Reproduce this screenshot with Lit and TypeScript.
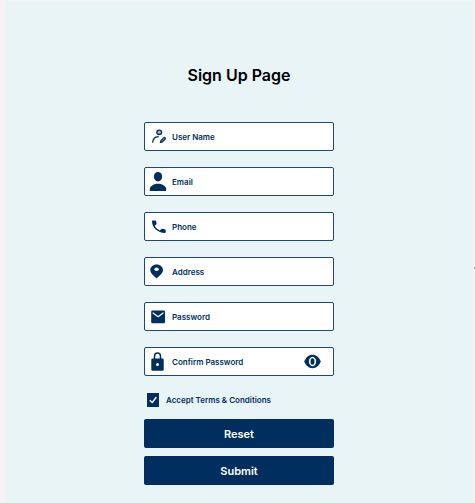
import { LitElement, html, css, svg } from "lit";
import { customElement, property, state } from "lit/decorators.js";

const icons = {
  user: svg`
    <g fill="none" stroke="currentColor" stroke-width="1.3" stroke-linecap="round">
      <ellipse cx="10.2" cy="6.3" rx="2.4" ry="2.2" fill="#a9bacd"/>
      <path d="M3.7 16.2C3.9 13 6 11 9.2 10.7"/>
      <path d="M11.6 16.4l.4-1.9 2.6-2.6a.9.9 0 0 1 1.4 1.3l-2.7 2.7z" fill="#8fa6bf"/>
    </g>`,
  person: svg`
    <ellipse cx="9" cy="5.7" rx="4.1" ry="4.8"/>
    <path d="M.8 20v-1.9C.8 14.8 5.5 12.8 9 12.8s8.200 2 8.200 5.300V20z"/>`,
  phone: svg`
    <path transform="translate(.7 2.3) scale(.76 .7)"
      d="M6.62 10.79c1.44 2.83 3.76 5.14 6.59 6.59l2.2-2.2c.27-.27.67-.36 1.02-.24 1.12.37 2.33.57 3.57.57.55 0 1 .45 1 1V20c0 .55-.45 1-1 1-9.39 0-17-7.61-17-17 0-.55.45-1 1-1h3.5c.55 0 1 .45 1 1 0 1.25.2 2.45.57 3.57.11.35.03.74-.25 1.02z"/>`,
  pin: svg`
    <path d="M7.6 3.5C4.1 3.5 1.3 5.9 1.3 9c0 3.1 3 5.2 6.300 8.500C10.900 14.200 14 12.100 14 9c0-3.100-2.800-5.500-6.400-5.500z"/>
    <ellipse cx="7.6" cy="8.3" rx="2.2" ry="1.7" fill="#fff"/>`,
  mail: svg`
    <rect x="2.2" y="4.5" width="13.8" height="12.8" rx="1.2"/>
    <path d="M3.7 6.7L9.1 10.7 14.5 6.7" fill="none" stroke="#fff" stroke-width="1.3"/>`,
  lock: svg`
    <path d="M5.5 8.5V5.2a3 3.2 0 0 1 6 0V8.5" fill="none" stroke="currentColor" stroke-width="1.5"/>
    <rect x="2.3" y="7.5" width="12.4" height="12.2" rx="1.3"/>
    <circle cx="8.5" cy="13.6" r="1.5" fill="#fff"/>`,
};

type IconName = keyof typeof icons;

interface Field {
  name: string;
  label: string;
  icon: IconName;
  type: string;
}

const fields: Field[] = [
  { name: "username", label: "User Name", icon: "user", type: "text" },
  { name: "email", label: "Email", icon: "person", type: "email" },
  { name: "phone", label: "Phone", icon: "phone", type: "tel" },
  { name: "address", label: "Address", icon: "pin", type: "text" },
  { name: "password", label: "Password", icon: "mail", type: "password" },
  { name: "confirm", label: "Confirm Password", icon: "lock", type: "password" },
];

@customElement("form-field")
class FormField extends LitElement {
  @property({ attribute: false }) field!: Field;
  @state() private revealed = false;

  static styles = css`
    :host {
      display: block;
    }
    .field {
      display: flex;
      align-items: center;
      gap: 5px;
      box-sizing: border-box;
      height: 29px;
      padding: 0 12px 0 4px;
      border: 1px solid #1f477a;
      border-radius: 2px;
      background: #fff;
      color: #002f5f;
    }
    .icon {
      flex: none;
      width: 18px;
      height: 21px;
      fill: currentColor;
    }
    .input {
      flex: 1;
      min-width: 0;
      padding: 0;
      border: 0;
      outline: 0;
      background: none;
      color: inherit;
      font: 600 8px/16px Inter, sans-serif;
    }
    .input::placeholder {
      color: inherit;
      opacity: 1;
    }
    .reveal {
      display: flex;
      padding: 0;
      border: 0;
      background: none;
      color: inherit;
      cursor: pointer;
    }
    .eye {
      width: 17px;
      height: 15px;
      fill: currentColor;
    }
  `;

  render() {
    const { name, label, icon, type } = this.field;
    return html`
      <label class="field">
        <svg class="icon" viewBox="0 0 18 21" aria-hidden="true">${icons[icon]}</svg>
        <input
          class="input"
          name=${name}
          type=${this.revealed ? "text" : type}
          placeholder=${label}
          aria-label=${label}
        />
        ${name === "confirm"
          ? html`<button
              class="reveal"
              type="button"
              aria-label="Show password"
              @click=${() => (this.revealed = !this.revealed)}
            >
              <svg class="eye" viewBox="0 0 17 15" aria-hidden="true">
                <path d="M.3 7.5C1.7 3.5 4.8.8 8.5.8s6.8 2.7 8.2 6.7c-1.4 4-4.5 6.7-8.2 6.7S1.7 11.5.3 7.5z"/>
                <ellipse cx="8.5" cy="7.5" rx="2.8" ry="4" fill="none" stroke="#fff" stroke-width="1.6"/>
              </svg>
            </button>`
          : ""}
      </label>
    `;
  }
}

@customElement("app-root")
class AppRoot extends LitElement {
  static styles = css`
    :host {
      position: relative;
      display: flex;
      box-sizing: border-box;
      min-height: 100vh;
      padding: 1px 2px 0 5px;
      background: #f4f4f4;
      font-family: Inter, sans-serif;
    }
    .panel {
      flex: 1;
      display: flex;
      flex-direction: column;
      align-items: center;
      padding: 62px 0 17px;
      background: #e8f4f6;
    }
    .title {
      margin: 0 0 35px;
      color: #000;
      font-size: 16px;
      line-height: 24px;
      font-weight: 600;
    }
    .form {
      display: flex;
      flex-direction: column;
      width: 40%;
      min-width: 190px;
    }
    .fields {
      display: grid;
      gap: 16px;
    }
    .terms {
      display: flex;
      align-items: center;
      gap: 7px;
      margin: 17px 0 12px 3px;
      color: #002f5f;
      font-size: 8px;
      line-height: 14px;
      font-weight: 600;
    }
    .check {
      display: grid;
    }
    .box,
    .tick {
      grid-area: 1 / 1;
      width: 12px;
      height: 14px;
      margin: 0;
    }
    .box {
      appearance: none;
      border: 1px solid #002f5f;
    }
    .box:checked {
      background: #002f5f;
    }
    .tick {
      pointer-events: none;
      fill: none;
      stroke: #fff;
      stroke-width: 1.4;
    }
    .actions {
      display: grid;
      gap: 8px;
    }
    .button {
      height: 29px;
      padding: 0;
      border: 0;
      border-radius: 2px;
      background: #002f5f;
      color: #fff;
      font: 600 11px/16px Inter, sans-serif;
      cursor: pointer;
    }
    .mark {
      position: absolute;
      top: 53%;
      right: 0;
      width: 1px;
      height: 2px;
      background: #aaa;
    }
  `;

  render() {
    return html`
      <main class="panel">
        <h1 class="title">Sign Up Page</h1>
        <form class="form" @submit=${(e: Event) => e.preventDefault()}>
          <div class="fields">
            ${fields.map((f) => html`<form-field .field=${f}></form-field>`)}
          </div>
          <label class="terms">
            <span class="check">
              <input class="box" type="checkbox" checked />
              <svg class="tick" viewBox="0 0 12 14" aria-hidden="true">
                <path d="M2.8 7.2l2.4 2.3L9.4 4.3"/>
              </svg>
            </span>
            Accept Terms &amp; Conditions
          </label>
          <div class="actions">
            <button class="button" type="reset">Reset</button>
            <button class="button" type="submit">Submit</button>
          </div>
        </form>
      </main>
      <span class="mark"></span>
    `;
  }
}
